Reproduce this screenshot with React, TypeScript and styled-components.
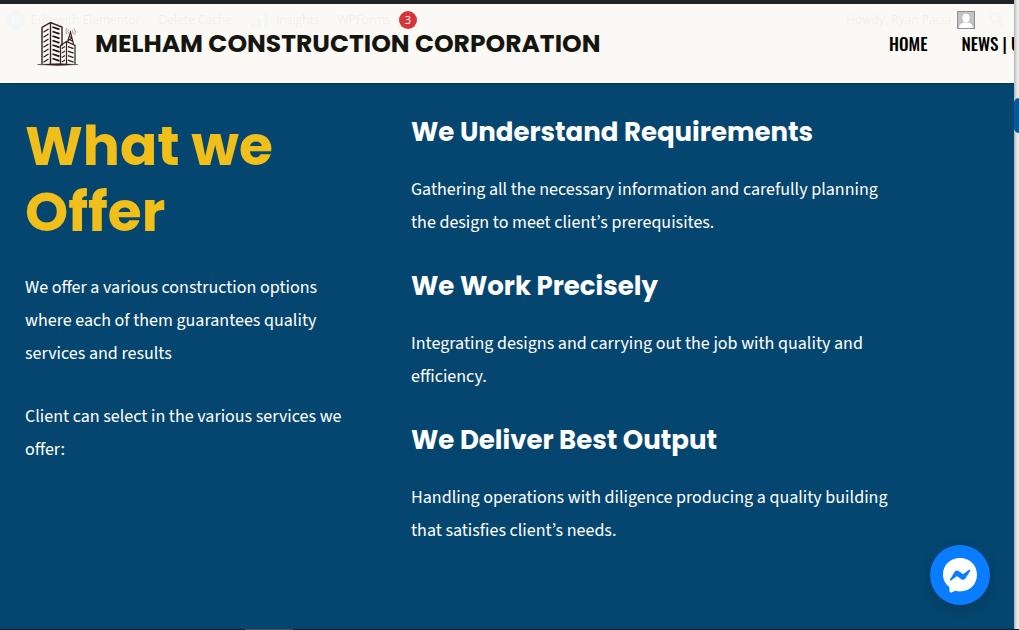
import React from "react";
import styled, { createGlobalStyle } from "styled-components";

const heading = `"Poppins", "Inter", "Open Sans", sans-serif`;
const body = `"Source Sans Pro", "Source Sans 3", "Noto Sans CJK KR", "Noto Sans", sans-serif`;
const narrow = `"Oswald", "Roboto Condensed", "Liberation Sans Narrow", "DejaVu Sans Condensed", sans-serif`;
const admin = `"Segoe UI", "Open Sans", "Noto Sans", sans-serif`;

const Global = createGlobalStyle`
  * { box-sizing: border-box; }
  body { margin: 0; background: #054670; overflow-x: hidden; }
  h1, h2, p { margin: 0; }
  a { color: inherit; text-decoration: none; }
`;

const Shell = styled.div`
  display: flex;
  min-height: 100vh;
  position: relative;
`;

const Page = styled.div`
  flex: 1;
  min-width: 0;
  display: flex;
  flex-direction: column;
  border-top: 4px solid #1d2327;
  overflow: hidden;
`;

const Edge = styled.aside`
  flex: none;
  width: 5px;
  padding-top: 98px;
  background: linear-gradient(to right, #b4b4b4, #e6e6e6 60%, #ededed);
`;

const EdgeTab = styled.div`
  height: 35px;
  border-radius: 5px 0 0 5px;
  background: #05579a;
`;

const Header = styled.header`
  position: relative;
  display: flex;
  align-items: center;
  height: 79px;
  padding-left: 37px;
  background: #fbf9f5;
  overflow: hidden;
`;

const Brand = styled.a`
  position: relative;
  z-index: 1;
  display: flex;
  align-items: center;
  gap: 16px;
  font: 700 25px/36px ${heading};
  color: #16160f;
  white-space: nowrap;
`;

const Nav = styled.nav`
  position: absolute;
  top: 26px;
  left: calc(100% - 125px);
  display: flex;
  gap: 34px;
  font: 500 17px/28px ${narrow};
  color: #000;
  white-space: nowrap;
`;

const AdminBar = styled.div`
  position: absolute;
  inset: 0 0 auto 0;
  display: flex;
  align-items: center;
  height: 32px;
  padding: 0 9px 0 7px;
  font: 400 12px/32px ${admin};
  color: #f1f0ed;
  white-space: nowrap;
`;

const AdminItem = styled.a<{ $gap: number }>`
  display: flex;
  align-items: center;
  gap: 6px;
  margin-right: ${(p) => p.$gap}px;
`;

const Count = styled.span`
  width: 18px;
  height: 18px;
  margin-left: 2px;
  border-radius: 50%;
  background: #d63638;
  color: #fff;
  font-size: 11px;
  line-height: 18px;
  text-align: center;
`;

const Spacer = styled.div`
  flex: 1;
`;

const Offer = styled.main`
  flex: 1;
  display: grid;
  grid-template-columns: 322px minmax(0, 480px);
  column-gap: 64px;
  align-items: start;
  padding: 30px 25px;
  background: #054670;
  box-shadow: inset 0 3px 3px -2px #04395c;
  color: #fff;
`;

const Title = styled.h1`
  max-width: 280px;
  margin-bottom: 26px;
  font: 700 55px/66px ${heading};
  color: #f1bf1a;
`;

const Steps = styled.section`
  display: flex;
  flex-direction: column;
  gap: 31px;
  padding-top: 3px;
`;

const Step = styled.article`
  display: flex;
  flex-direction: column;
  gap: 25px;
`;

const StepTitle = styled.h2`
  font: 700 26px/32px ${heading};
  white-space: nowrap;
`;

const Text = styled.p`
  font: 400 18px/33px ${body};

  & + & {
    margin-top: 30px;
  }
`;

const ChatButton = styled.button`
  position: fixed;
  right: 29px;
  bottom: 25px;
  width: 60px;
  height: 60px;
  padding: 0;
  border: 0;
  border-radius: 50%;
  background: #0a7cff;
  box-shadow: 0 3px 12px rgba(0, 0, 0, 0.2);
  cursor: pointer;

  svg {
    display: block;
  }
`;

const BottomLine = styled.div`
  position: fixed;
  inset: auto 0 0 0;
  height: 1px;
  padding-left: 245px;
  background: #111a22;

  &::before {
    content: "";
    display: block;
    width: 48px;
    height: 1px;
    background: #4a5058;
  }
`;

const leftWindows = [10, 15, 20, 25, 30, 35, 40];
const rightWindows = [6, 10.5, 15, 19.5, 24, 28.5, 33, 37.5];
const annexWindows = [26, 30.5, 35, 39.5];

const BuildingLogo = () => (
  <svg width="42" height="46" viewBox="0 0 42 46" fill="none" stroke="#33201f" aria-hidden="true">
    <path d="M5 43V6.5L13.5 1.5L25 6V25M13.5 1.5V43" strokeWidth="1.4" />
    <path d="M23.5 43V24.5L29.5 20.5L38 24.5V43M29.5 21V43" strokeWidth="1.2" />
    {leftWindows.map((y) => (
      <path key={y} d={`M6.5 ${y + 1.2}L11.5 ${y - 2}`} strokeWidth="1.3" />
    ))}
    {rightWindows.map((y) => (
      <path key={y} d={`M15.5 ${y}L22.5 ${y + 2.4}`} strokeWidth="1.7" stroke="#1c1011" />
    ))}
    {annexWindows.map((y) => (
      <g key={y}>
        <path d={`M24.8 ${y + 1.4}L28 ${y - 0.4}`} strokeWidth="1.1" />
        <path d={`M31 ${y - 0.4}L36.5 ${y + 1.6}`} strokeWidth="1.5" />
      </g>
    ))}
    <path d="M30.5 21L33.5 11L36.5 23M31.6 18L36 20.5M32.4 15.2L35 17.4M35 17L31.2 19.6" strokeWidth="1.1" />
    <path
      d="M31.6 8.5Q30.4 10.6 31.8 12.6M29.8 7Q27.8 10.2 29.8 13.6M35.2 9Q36.6 10.8 35.6 12.8M37 7.6Q39.4 10.6 37.6 14"
      strokeWidth="0.8"
      stroke="#9b7f7a"
    />
    <path d="M0.5 43.5L21 42.6L41 43.5L21 44.6Z" fill="#33201f" strokeWidth="0.4" />
  </svg>
);

const steps = [
  {
    title: "We Understand Requirements",
    text: "Gathering all the necessary information and carefully planning the design to meet client’s prerequisites.",
  },
  {
    title: "We Work Precisely",
    text: "Integrating designs and carrying out the job with quality and efficiency.",
  },
  {
    title: "We Deliver Best Output",
    text: "Handling operations with diligence producing a quality building that satisfies client’s needs.",
  },
];

export default function App() {
  return (
    <Shell>
      <Global />
      <Page>
        <Header>
          <AdminBar>
            <AdminItem href="#" $gap={18}>
              <svg width="18" height="18" viewBox="0 0 18 18" aria-hidden="true">
                <circle cx="9" cy="9" r="9" fill="#f1f6f9" />
                <path d="M6 5v8M8.500 5.700h4M8.500 9h4M8.500 12.300h4" stroke="#fbf9f5" strokeWidth="1.5" />
              </svg>
              Edit with Elementor
            </AdminItem>
            <AdminItem href="#" $gap={18}>Delete Cache</AdminItem>
            <AdminItem href="#" $gap={18}>
              <svg width="20" height="18" viewBox="0 0 20 18" fill="#f1f6f9" aria-hidden="true">
                <rect x="1" y="12" width="4" height="5" rx="1" />
                <rect x="7" y="7" width="4" height="10" rx="1" />
                <rect x="14" y="1" width="4" height="16" rx="1" />
              </svg>
              Insights
            </AdminItem>
            <AdminItem href="#" $gap={0}>
              WPForms <Count>3</Count>
            </AdminItem>
            <Spacer />
            <AdminItem href="#" $gap={14}>
              Howdy, Ryan Pacia
              <svg width="18" height="18" viewBox="0 0 18 18" aria-hidden="true">
                <rect x="0.5" y="0.5" width="17" height="17" fill="#c3c3c3" stroke="#8c8f94" />
                <ellipse cx="9" cy="7" rx="3.600" ry="4.200" fill="#fff" />
                <path d="M2 17c0-4 3-5 5-5.500h4c2 .5 5 1.500 5 5.500z" fill="#fff" />
              </svg>
            </AdminItem>
            <svg width="16" height="16" viewBox="0 0 16 16" fill="none" stroke="#f4f6f5" strokeWidth="2.500" aria-hidden="true">
              <circle cx="6" cy="6" r="4.500" />
              <path d="M9.500 9.500L15 14.500" />
            </svg>
          </AdminBar>
          <Brand href="#">
            <BuildingLogo />
            MELHAM CONSTRUCTION CORPORATION
          </Brand>
          <Nav>
            <a href="#">HOME</a>
            <a href="#">NEWS | UPDATES</a>
          </Nav>
        </Header>
        <Offer>
          <section>
            <Title>What we Offer</Title>
            <Text>We offer a various construction options where each of them guarantees quality services and results</Text>
            <Text>Client can select in the various services we offer:</Text>
          </section>
          <Steps>
            {steps.map((s) => (
              <Step key={s.title}>
                <StepTitle>{s.title}</StepTitle>
                <Text>{s.text}</Text>
              </Step>
            ))}
          </Steps>
        </Offer>
      </Page>
      <Edge>
        <EdgeTab />
      </Edge>
      <ChatButton aria-label="Open chat">
        <svg width="60" height="60" viewBox="0 0 60 60" aria-hidden="true">
          <path
            d="M30 13C20.200 13 13 20 13 29.500C13 34.500 15.300 38.700 18.800 41.500C19.300 42 19.400 42.500 19.400 43.200L19.600 46.300C19.700 47.300 20.500 47.800 21.400 47.400L24.700 46C25.200 45.800 25.600 45.700 26.200 45.900C27.400 46.200 28.700 46.400 30 46.400C39.800 46.400 47 39.200 47 29.700C47 20 39.800 13 30 13Z"
            fill="#fff"
          />
          <path
            d="M19.900 34.400L24.900 26.500C25.700 25.300 27.400 25 28.500 25.900L32.500 28.800C32.900 29.100 33.300 29.100 33.700 28.800L39 24.800C39.700 24.300 40.600 25.100 40.200 25.900L35.200 33.700C34.400 34.900 32.700 35.200 31.600 34.400L27.600 31.400C27.200 31.100 26.800 31.100 26.400 31.400L21.100 35.500C20.300 36 19.400 35.200 19.900 34.400Z"
            fill="#0a7cff"
          />
        </svg>
      </ChatButton>
      <BottomLine />
    </Shell>
  );
}
